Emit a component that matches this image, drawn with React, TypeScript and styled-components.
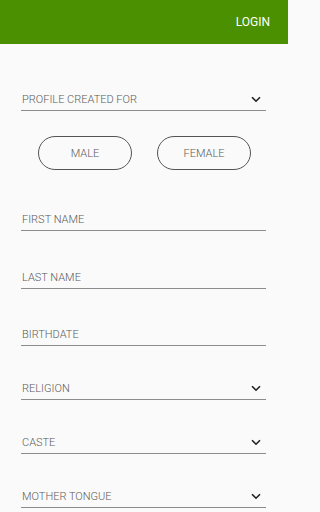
import styled, { createGlobalStyle } from 'styled-components';

const GlobalStyle = createGlobalStyle`
  html, body {
    margin: 0;
    padding: 0;
    background: #fafafa;
  }
  * {
    box-sizing: border-box;
  }
`;

type FieldDef = {
  label: string;
  select?: boolean;
  top: number;
};

const fields: FieldDef[] = [
  { label: 'FIRST NAME', top: 38 },
  { label: 'LAST NAME', top: 35 },
  { label: 'BIRTHDATE', top: 34 },
  { label: 'RELIGION', select: true, top: 31 },
  { label: 'CASTE', select: true, top: 31 },
  { label: 'MOTHER TONGUE', select: true, top: 31 },
];

function Chevron() {
  return (
    <svg width="10" height="7" viewBox="0 0 10 7">
      <path d="M1 1.2 L5 5.2 L9 1.2" fill="none" stroke="#222" strokeWidth="1.6" />
    </svg>
  );
}

function App() {
  return (
    <Page>
      <GlobalStyle />
      <Header>
        <LoginButton>LOGIN</LoginButton>
      </Header>
      <Form>
        <Field $top={44}>
          <Label>PROFILE CREATED FOR</Label>
          <Chevron />
        </Field>
        <GenderRow>
          <GenderButton>MALE</GenderButton>
          <GenderButton>FEMALE</GenderButton>
        </GenderRow>
        {fields.map((f) => (
          <Field key={f.label} $top={f.top}>
            <Label>{f.label}</Label>
            {f.select && <Chevron />}
          </Field>
        ))}
      </Form>
    </Page>
  );
}

const Page = styled.div`
  width: 288px;
  height: 512px;
  overflow: hidden;
  background: #fafafa;
`;

const Header = styled.header`
  height: 44px;
  background: #4a9000;
  display: flex;
  align-items: center;
  justify-content: flex-end;
  padding-right: 18px;
`;

const LoginButton = styled.span`
  color: #ffffff;
  font-family: Roboto, 'Liberation Sans', sans-serif;
  font-weight: 400;
  font-size: 12px;
`;

const Form = styled.div`
  display: flex;
  flex-direction: column;
  padding: 0 22px 0 21px;
`;

const Field = styled.div<{ $top: number }>`
  margin-top: ${(p) => p.$top}px;
  height: 23px;
  display: flex;
  align-items: center;
  justify-content: space-between;
  padding: 0 5px 0 1px;
  border-bottom: 1px solid #8c8c8c;
`;

const Label = styled.span`
  font-family: Roboto, 'Liberation Sans', sans-serif;
  font-weight: 300;
  font-size: 11px;
  color: #5a5a5a;
`;

const GenderRow = styled.div`
  margin-top: 25px;
  display: flex;
  justify-content: center;
  gap: 25px;
  padding-left: 2px;
`;

const GenderButton = styled.button`
  width: 94px;
  height: 34px;
  border: 1px solid #555;
  border-radius: 17px;
  background: transparent;
  font-family: Roboto, 'Liberation Sans', sans-serif;
  font-weight: 300;
  font-size: 11px;
  color: #5a5a5a;
  padding: 0;
`;

export default App;
